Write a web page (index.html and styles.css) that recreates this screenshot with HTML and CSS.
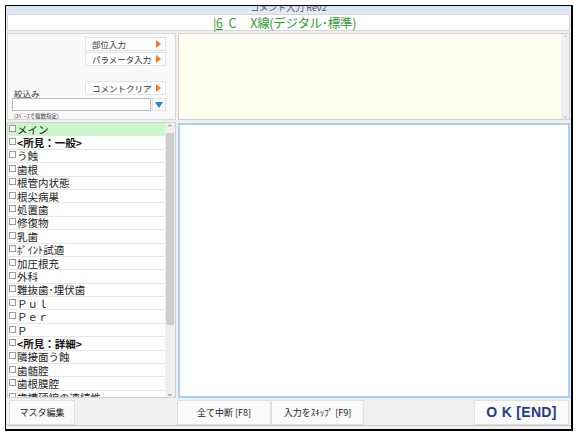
FILE: index.html
```html
<!DOCTYPE html>
<html lang="ja">
<head>
<meta charset="utf-8">
<title>コメント入力 Rev2</title>
<link rel="stylesheet" href="styles.css">
</head>
<body>
<div class="win">
  <div class="titlebar"><div class="title-text">コメント入力 Rev2</div></div>
  <div class="header"><span class="hd"><span class="u">|6</span><span class="c">C</span><span class="x">X線(デジタル･標準)</span></span></div>
  <div class="main">
    <div class="left">
      <div class="ctrl">
        <div class="btnrow"><div class="btn">部位入力<span class="tri"></span></div></div>
        <div class="btnrow"><div class="btn">パラメータ入力<span class="tri"></span></div></div>
        <div class="row3">
          <span class="lbl">絞込み</span>
          <div class="btn">コメントクリア<span class="tri"></span></div>
        </div>
        <div class="inputrow">
          <div class="inp"></div>
          <div class="dd"><span class="dtri"></span></div>
        </div>
        <div class="hint">(ｽﾍﾟｰｽで複数指定)</div>
      </div>
      <div class="list">
        <div class="items">
          <div class="row sel"><span class="cb"></span>メイン</div>
          <div class="row b"><span class="cb"></span>&lt;所見：一般&gt;</div>
          <div class="row"><span class="cb"></span>う蝕</div>
          <div class="row"><span class="cb"></span>歯根</div>
          <div class="row"><span class="cb"></span>根管内状態</div>
          <div class="row"><span class="cb"></span>根尖病巣</div>
          <div class="row"><span class="cb"></span>処置歯</div>
          <div class="row"><span class="cb"></span>修復物</div>
          <div class="row"><span class="cb"></span>乳歯</div>
          <div class="row"><span class="cb"></span>ﾎﾟｲﾝﾄ試適</div>
          <div class="row"><span class="cb"></span>加圧根充</div>
          <div class="row"><span class="cb"></span>外科</div>
          <div class="row"><span class="cb"></span>難抜歯･埋伏歯</div>
          <div class="row"><span class="cb"></span>Ｐｕｌ</div>
          <div class="row"><span class="cb"></span>Ｐｅｒ</div>
          <div class="row"><span class="cb"></span>Ｐ</div>
          <div class="row b"><span class="cb"></span>&lt;所見：詳細&gt;</div>
          <div class="row"><span class="cb"></span>隣接面う蝕</div>
          <div class="row"><span class="cb"></span>歯髄腔</div>
          <div class="row"><span class="cb"></span>歯根膜腔</div>
          <div class="row"><span class="cb"></span>歯槽硬線の連続性</div>
        </div>
        <div class="sb">
          <div class="arr">&#8963;</div>
          <div class="thumb"></div>
          <div class="sbspace"></div>
          <div class="arr">&#8964;</div>
        </div>
      </div>
    </div>
    <div class="right">
      <div class="memo">
        <div class="memo-area"></div>
        <div class="msb"><div class="marr">&#8963;</div><div class="marr">&#8964;</div></div>
      </div>
      <div class="edit"></div>
    </div>
  </div>
  <div class="footer">
    <div class="fbtn master">マスタ編集</div>
    <div class="fbtn stop">全て中断 [F8]</div>
    <div class="fbtn skip">入力をｽｷｯﾌﾟ [F9]</div>
    <div class="fspace"></div>
    <div class="fbtn ok">O K [END]</div>
  </div>
</div>
</body>
</html>
```
FILE: styles.css
```css
html, body {
  margin: 0;
  padding: 0;
  background: #ffffff;
}
body {
  width: 581px;
  height: 433px;
  overflow: hidden;
  font-family: "Noto Sans CJK JP", "Noto Sans", sans-serif;
  color: #222;
}
.win {
  margin: 5px 0 0 5px;
  width: 568px;
  height: 426px;
  box-sizing: border-box;
  border: 1px solid #000;
  border-right-width: 2px;
  border-bottom-width: 2px;
  background: #f0f0f0;
  display: flex;
  flex-direction: column;
}
.titlebar {
  height: 8px;
  overflow: hidden;
  background: linear-gradient(#d6e2f2, #e4ecf7);
  text-align: center;
}
.title-text {
  font-size: 9px;
  line-height: 9px;
  margin-top: -3px;
  color: #555;
}
.header {
  height: 17px;
  margin: 0 1px;
  box-sizing: border-box;
  background: #fff;
  border: 1px solid #d4d4d4;
  display: flex;
  justify-content: center;
  align-items: center;
}
.hd {
  font-size: 12.5px;
  line-height: 15px;
  color: #2f9a2f;
  letter-spacing: -0.3px;
  display: flex;
  padding-right: 8px;
}
.u {
  text-decoration: underline;
}
.c {
  margin-left: 6px;
}
.x {
  margin-left: 14px;
}
.main {
  display: flex;
  margin-top: 2px;
  height: 365px;
  padding: 0 1px 0 1px;
  gap: 2px;
}
.left {
  width: 169px;
  display: flex;
  flex-direction: column;
  gap: 2px;
}
.ctrl {
  height: 87px;
  box-sizing: border-box;
  background: #f9f9f9;
  border: 1px solid #d8d8d8;
  padding: 3px 9px 0 4px;
  display: flex;
  flex-direction: column;
}
.btnrow {
  display: flex;
  justify-content: flex-end;
  margin-bottom: 1px;
}
.btn {
  width: 81px;
  height: 14px;
  box-sizing: border-box;
  background: #fdfdfd;
  border: 1px solid #e2e2e2;
  font-size: 8.5px;
  line-height: 12px;
  padding-left: 6px;
  color: #333;
  display: flex;
  align-items: center;
  justify-content: space-between;
  padding-right: 4px;
}
.tri {
  width: 0;
  height: 0;
  border-top: 4px solid transparent;
  border-bottom: 4px solid transparent;
  border-left: 5px solid #f47a22;
}
.row3 {
  margin-top: 14px;
  display: flex;
  justify-content: space-between;
  align-items: flex-end;
}
.lbl {
  font-size: 8.5px;
  line-height: 9px;
  color: #333;
  padding-left: 2px;
  margin-bottom: -3px;
}
.inputrow {
  display: flex;
  gap: 1px;
  margin-top: 3px;
  height: 16px;
}
.inp {
  flex: 1;
  background: #fff;
  border: 1px solid #b8b8b8;
}
.dd {
  width: 12px;
  background: #f9f9f9;
  border: 1px solid #e2e2e2;
  display: flex;
  align-items: center;
  justify-content: center;
}
.dtri {
  width: 0;
  height: 0;
  border-left: 4px solid transparent;
  border-right: 4px solid transparent;
  border-top: 6px solid #1c86e8;
}
.hint {
  font-size: 5.5px;
  line-height: 6px;
  margin-top: 2px;
  padding-left: 2px;
  color: #333;
}
.list {
  height: 276px;
  box-sizing: border-box;
  background: #fff;
  border: 1px solid #cfcfcf;
  display: flex;
}
.items {
  flex: 1;
  overflow: hidden;
}
.row {
  height: 13.4px;
  box-sizing: border-box;
  border-bottom: 1px solid #e6e6e6;
  display: flex;
  align-items: center;
  font-size: 10.5px;
  line-height: 11px;
  white-space: nowrap;
  color: #222;
  overflow: hidden;
}
.row.sel {
  background: #c9f7c9;
}
.row.b {
  font-weight: bold;
  color: #111;
}
.cb {
  width: 5px;
  height: 5px;
  border: 1px solid #9a9a9a;
  margin: 0 1px 2px 1px;
  flex: none;
  background: #fff;
}
.sb {
  width: 10px;
  background: #f0f0f0;
  display: flex;
  flex-direction: column;
}
.arr {
  height: 9px;
  font-size: 9px;
  line-height: 9px;
  text-align: center;
  color: #777;
}
.thumb {
  margin: 1px 1px 0 1px;
  height: 192px;
  background: #cdcdcd;
}
.sbspace {
  flex: 1;
}
.right {
  flex: 1;
  display: flex;
  flex-direction: column;
  gap: 3px;
}
.memo {
  height: 87px;
  box-sizing: border-box;
  border: 1px solid #cfcfcf;
  display: flex;
  background: #fffff0;
}
.memo-area {
  flex: 1;
}
.msb {
  width: 8px;
  background: #efefef;
  display: flex;
  flex-direction: column;
  justify-content: space-between;
}
.marr {
  font-size: 8px;
  line-height: 8px;
  text-align: center;
  color: #bbb;
}
.edit {
  flex: 1;
  background: #fff;
  border: 2px solid #a9cff2;
}
.footer {
  flex: 1;
  display: flex;
  align-items: flex-start;
  padding: 2px 2px 0 3px;
  border-bottom: 1px solid #c8c8c8;
  margin-bottom: 3px;
}
.fbtn {
  height: 25px;
  box-sizing: border-box;
  background: #fafafa;
  border: 1px solid #e0e0e0;
  font-size: 9px;
  line-height: 23px;
  text-align: center;
  color: #222;
}
.master {
  width: 66px;
}
.stop {
  width: 94px;
  margin-left: 102px;
}
.skip {
  width: 93px;
}
.fspace {
  flex: 1;
}
.ok {
  width: 95px;
  font-family: "Liberation Sans", "DejaVu Sans", sans-serif;
  font-weight: bold;
  font-size: 14px;
  letter-spacing: 0.3px;
  color: #1e3c8c;
}
```
